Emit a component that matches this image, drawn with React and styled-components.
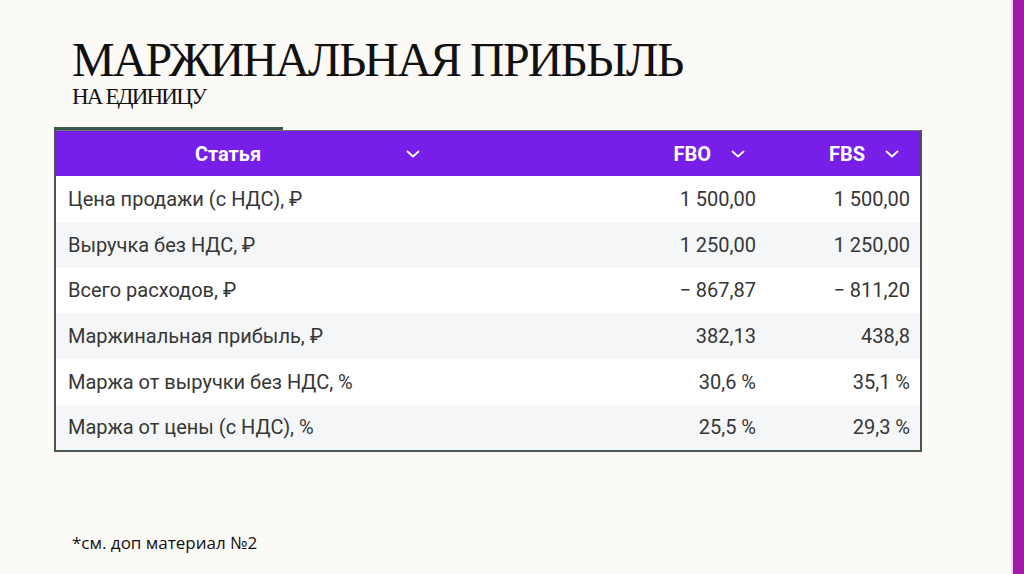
import React from 'react';
import styled, {createGlobalStyle} from 'styled-components';

const rows = [
  {label: 'Цена продажи (с НДС), ₽', fbo: '1 500,00', fbs: '1 500,00'},
  {label: 'Выручка без НДС, ₽', fbo: '1 250,00', fbs: '1 250,00'},
  {label: 'Всего расходов, ₽', fbo: '− 867,87', fbs: '− 811,20'},
  {label: 'Маржинальная прибыль, ₽', fbo: '382,13', fbs: '438,8'},
  {label: 'Маржа от выручки без НДС, %', fbo: '30,6 %', fbs: '35,1 %'},
  {label: 'Маржа от цены (с НДС), %', fbo: '25,5 %', fbs: '29,3 %'},
];

function Chevron() {
  return (
    <ChevronSvg viewBox="0 0 14 8" width="14" height="8">
      <polyline points="1.5,1.5 7,6.5 12.5,1.5" />
    </ChevronSvg>
  );
}

function App() {
  return (
    <>
      <GlobalStyle />
      <Page>
        <Slide>
          <Heading>
            <Title>МАРЖИНАЛЬНАЯ ПРИБЫЛЬ</Title>
            <Subtitle>НА ЕДИНИЦУ</Subtitle>
          </Heading>

          <TableWrap>
            <TopBar />
            <Table>
              <colgroup>
                <col style={{width: 386}} />
                <col style={{width: 325}} />
                <col />
              </colgroup>
              <thead>
                <tr>
                  <HeadCell>
                    <HeadInner $center>
                      <span>Статья</span>
                      <Chevron />
                    </HeadInner>
                  </HeadCell>
                  <HeadCell>
                    <HeadInner>
                      <span>FBO</span>
                      <Chevron />
                    </HeadInner>
                  </HeadCell>
                  <HeadCell>
                    <HeadInner>
                      <span>FBS</span>
                      <Chevron />
                    </HeadInner>
                  </HeadCell>
                </tr>
              </thead>
              <tbody>
                {rows.map((r, i) => (
                  <Row key={r.label} $odd={i % 2 === 1}>
                    <LabelCell>{r.label}</LabelCell>
                    <NumCell>{r.fbo}</NumCell>
                    <NumCell>{r.fbs}</NumCell>
                  </Row>
                ))}
              </tbody>
            </Table>
          </TableWrap>

          <Footnote>*см. доп материал №2</Footnote>
        </Slide>
        <SideStripe />
      </Page>
    </>
  );
}

export default App;

const GlobalStyle = createGlobalStyle`
  html, body {
    margin: 0;
    padding: 0;
    background: #fcfaf6;
  }
`;

const Page = styled.div`
  display: flex;
  width: 1024px;
  height: 574px;
  background: #fcfaf6;
  overflow: hidden;
`;

const Slide = styled.div`
  flex: 1;
  display: flex;
  flex-direction: column;
  padding: 0 0 0 54px;
`;

const SideStripe = styled.div`
  width: 11px;
  background: #a21aa8;
  border-left: 2px solid #f3d6f3;
`;

const Heading = styled.div`
  padding: 36px 0 0 18px;
  font-family: 'Liberation Serif', 'DejaVu Serif', serif;
  color: #111;
`;

const Title = styled.h1`
  margin: 0;
  font-weight: 400;
  font-size: 48px;
  line-height: 48px;
  letter-spacing: -1.9px;
`;

const Subtitle = styled.div`
  font-size: 23px;
  line-height: 26px;
  letter-spacing: -1.8px;
`;

const TableWrap = styled.div`
  width: 868px;
  margin-top: 17px;
  display: flex;
  flex-direction: column;
`;

const TopBar = styled.div`
  width: 229px;
  height: 3px;
  background: #3e5a4f;
`;

const Table = styled.table`
  width: 868px;
  border-collapse: collapse;
  border: 2px solid #4b5752;
  border-top: 1px solid #6c7772;
  font-family: Roboto, 'Liberation Sans', sans-serif;
  table-layout: fixed;
`;

const HeadCell = styled.th`
  height: 45px;
  padding: 0 18px 0 14px;
  background: #781ee9;
  color: #fff;
  font-size: 20px;
  font-weight: 700;
`;

const HeadInner = styled.div`
  display: flex;
  align-items: center;
  justify-content: flex-end;
  gap: 20px;

  span {
    flex: ${(p) => (p.$center ? 1 : 'none')};
    text-align: center;
  }
`;

const ChevronSvg = styled.svg`
  flex: none;
  margin-right: 3px;
  fill: none;
  stroke: #fff;
  stroke-width: 1.8;
  stroke-linecap: round;
  stroke-linejoin: round;
`;

const Row = styled.tr`
  height: 45.8px;
  background: ${(p) => (p.$odd ? '#f5f6f8' : '#ffffff')};
`;

const LabelCell = styled.td`
  padding: 0 12px;
  font-size: 20px;
  color: #363636;
  white-space: nowrap;
`;

const NumCell = styled.td`
  padding: 0 10px 0 12px;
  text-align: right;
  font-size: 20px;
  color: #363636;
  white-space: nowrap;
`;

const Footnote = styled.div`
  margin-top: auto;
  margin-bottom: 20px;
  padding-left: 18px;
  font-family: 'Open Sans', 'Liberation Sans', sans-serif;
  font-size: 17px;
  color: #111;
`;
